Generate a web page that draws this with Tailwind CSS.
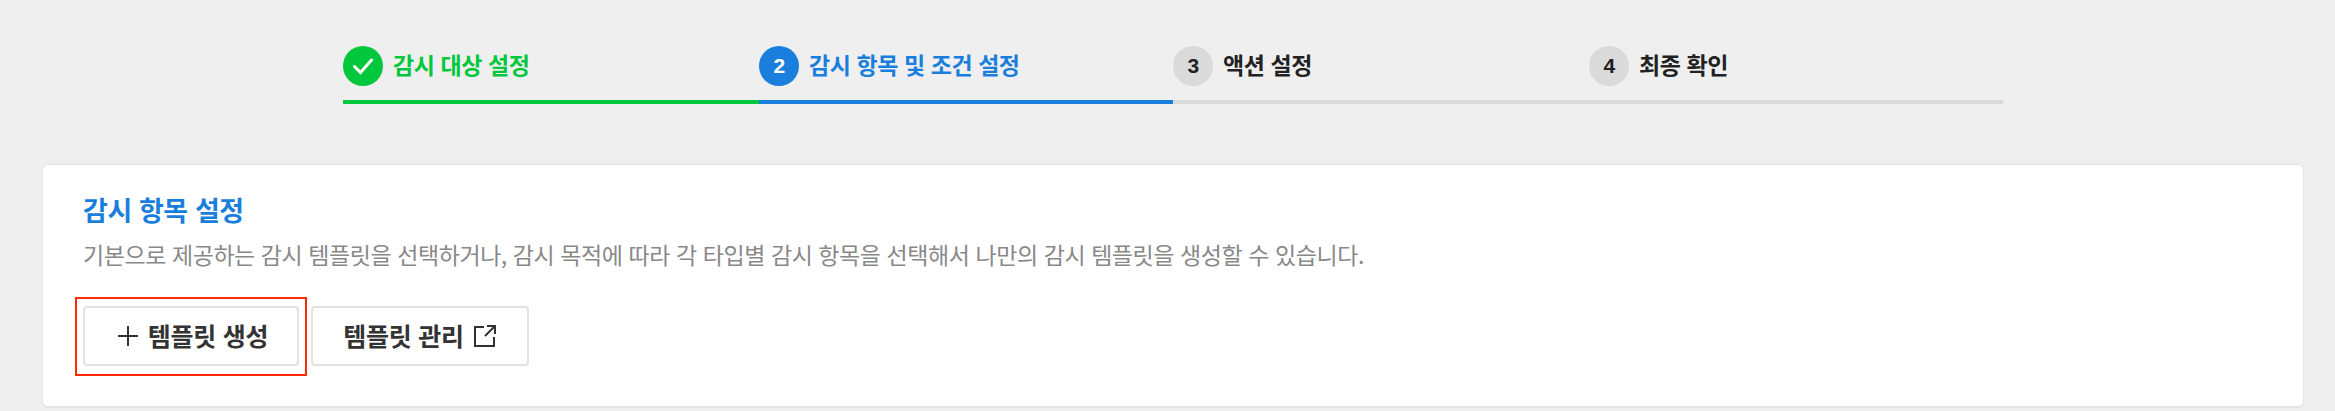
<!DOCTYPE html>
<html lang="ko">
  <head>
    <meta charset="UTF-8" />
    <title>감시 항목 설정</title>
    <script src="https://cdn.jsdelivr.net/npm/@tailwindcss/browser@4"></script>
  </head>
  <body class="h-[411px] overflow-hidden bg-[#efefef] font-['Noto_Sans_CJK_KR','Noto_Sans',sans-serif] tracking-[-0.027em]">
    <!-- Stepper -->
    <ol class="ml-[343px] flex w-[1660px] pt-[46px]">
      <li class="flex h-[54px] w-[416px] gap-[10px] border-b-4 border-[#00c73c] box-content">
        <span class="flex size-10 items-center justify-center rounded-full bg-[#00c73c]">
          <svg class="size-10" viewBox="0 0 40 40" fill="none" stroke="white" stroke-width="3" stroke-linecap="round"><path d="M11.5 20.5l6 6L28.5 14" /></svg>
        </span>
        <span class="text-[23px] leading-[36px] font-bold text-[#00c73c]">감시 대상 설정</span>
      </li>
      <li class="flex h-[54px] w-[414px] gap-[10px] border-b-4 border-[#1a7fdc] box-content">
        <span class="flex size-10 items-center justify-center rounded-full bg-[#1a7fdc] font-['Liberation_Sans'] text-[21px] font-bold text-white">2</span>
        <span class="text-[23px] leading-[36px] font-bold text-[#1a7fdc]">감시 항목 및 조건 설정</span>
      </li>
      <li class="flex h-[54px] w-[416px] gap-[10px] border-b-4 border-[#dadada] box-content">
        <span class="flex size-10 items-center justify-center rounded-full bg-[#dadada] font-['Liberation_Sans'] text-[21px] font-bold text-[#222]">3</span>
        <span class="text-[23px] leading-[36px] font-bold text-[#222]">액션 설정</span>
      </li>
      <li class="flex h-[54px] w-[414px] gap-[10px] border-b-4 border-[#dadada] box-content">
        <span class="flex size-10 items-center justify-center rounded-full bg-[#dadada] font-['Liberation_Sans'] text-[21px] font-bold text-[#222]">4</span>
        <span class="text-[23px] leading-[36px] font-bold text-[#222]">최종 확인</span>
      </li>
    </ol>

    <!-- Card -->
    <section class="mx-[42px] mt-[60px] h-[244px] w-[2262px] rounded-md border border-b-2 border-[#e4e4e4] bg-white pl-[40px] pt-[25px]">
      <h2 class="text-[27px] leading-[40px] font-bold text-[#1a7fdc]">감시 항목 설정</h2>
      <p class="mt-[8px] text-[23px] leading-[32px] text-[#888]">기본으로 제공하는 감시 템플릿을 선택하거나, 감시 목적에 따라 각 타입별 감시 항목을 선택해서 나만의 감시 템플릿을 생성할 수 있습니다.</p>
      <div class="mt-[36px] flex gap-3">
        <div class="relative">
          <button class="flex h-[60px] w-[216px] items-center justify-center gap-[9px] rounded border-2 border-[#e2e2e2] bg-white pl-[3px] text-[25px] font-bold tracking-[-0.01em] text-[#333]">
            <svg class="size-[22px]" viewBox="0 0 22 22" fill="none" stroke="#333" stroke-width="2"><path d="M11 1v20M1 11h20" /></svg>
            템플릿 생성
          </button>
          <div class="absolute -inset-x-[8px] -inset-y-[9px] -bottom-[10px] border-2 border-[#ff2a00]"></div>
        </div>
        <button class="flex h-[60px] w-[218px] items-center justify-center gap-[9px] rounded border-2 border-[#e2e2e2] bg-white text-[25px] font-bold tracking-[-0.01em] text-[#333]">
          템플릿 관리
          <svg class="size-[24px]" viewBox="0 0 24 24" fill="none" stroke="#333" stroke-width="2"><path d="M11 3H2v19h19v-9M12 12L22 2M14 2h8v8" /></svg>
        </button>
      </div>
    </section>
  </body>
</html>
